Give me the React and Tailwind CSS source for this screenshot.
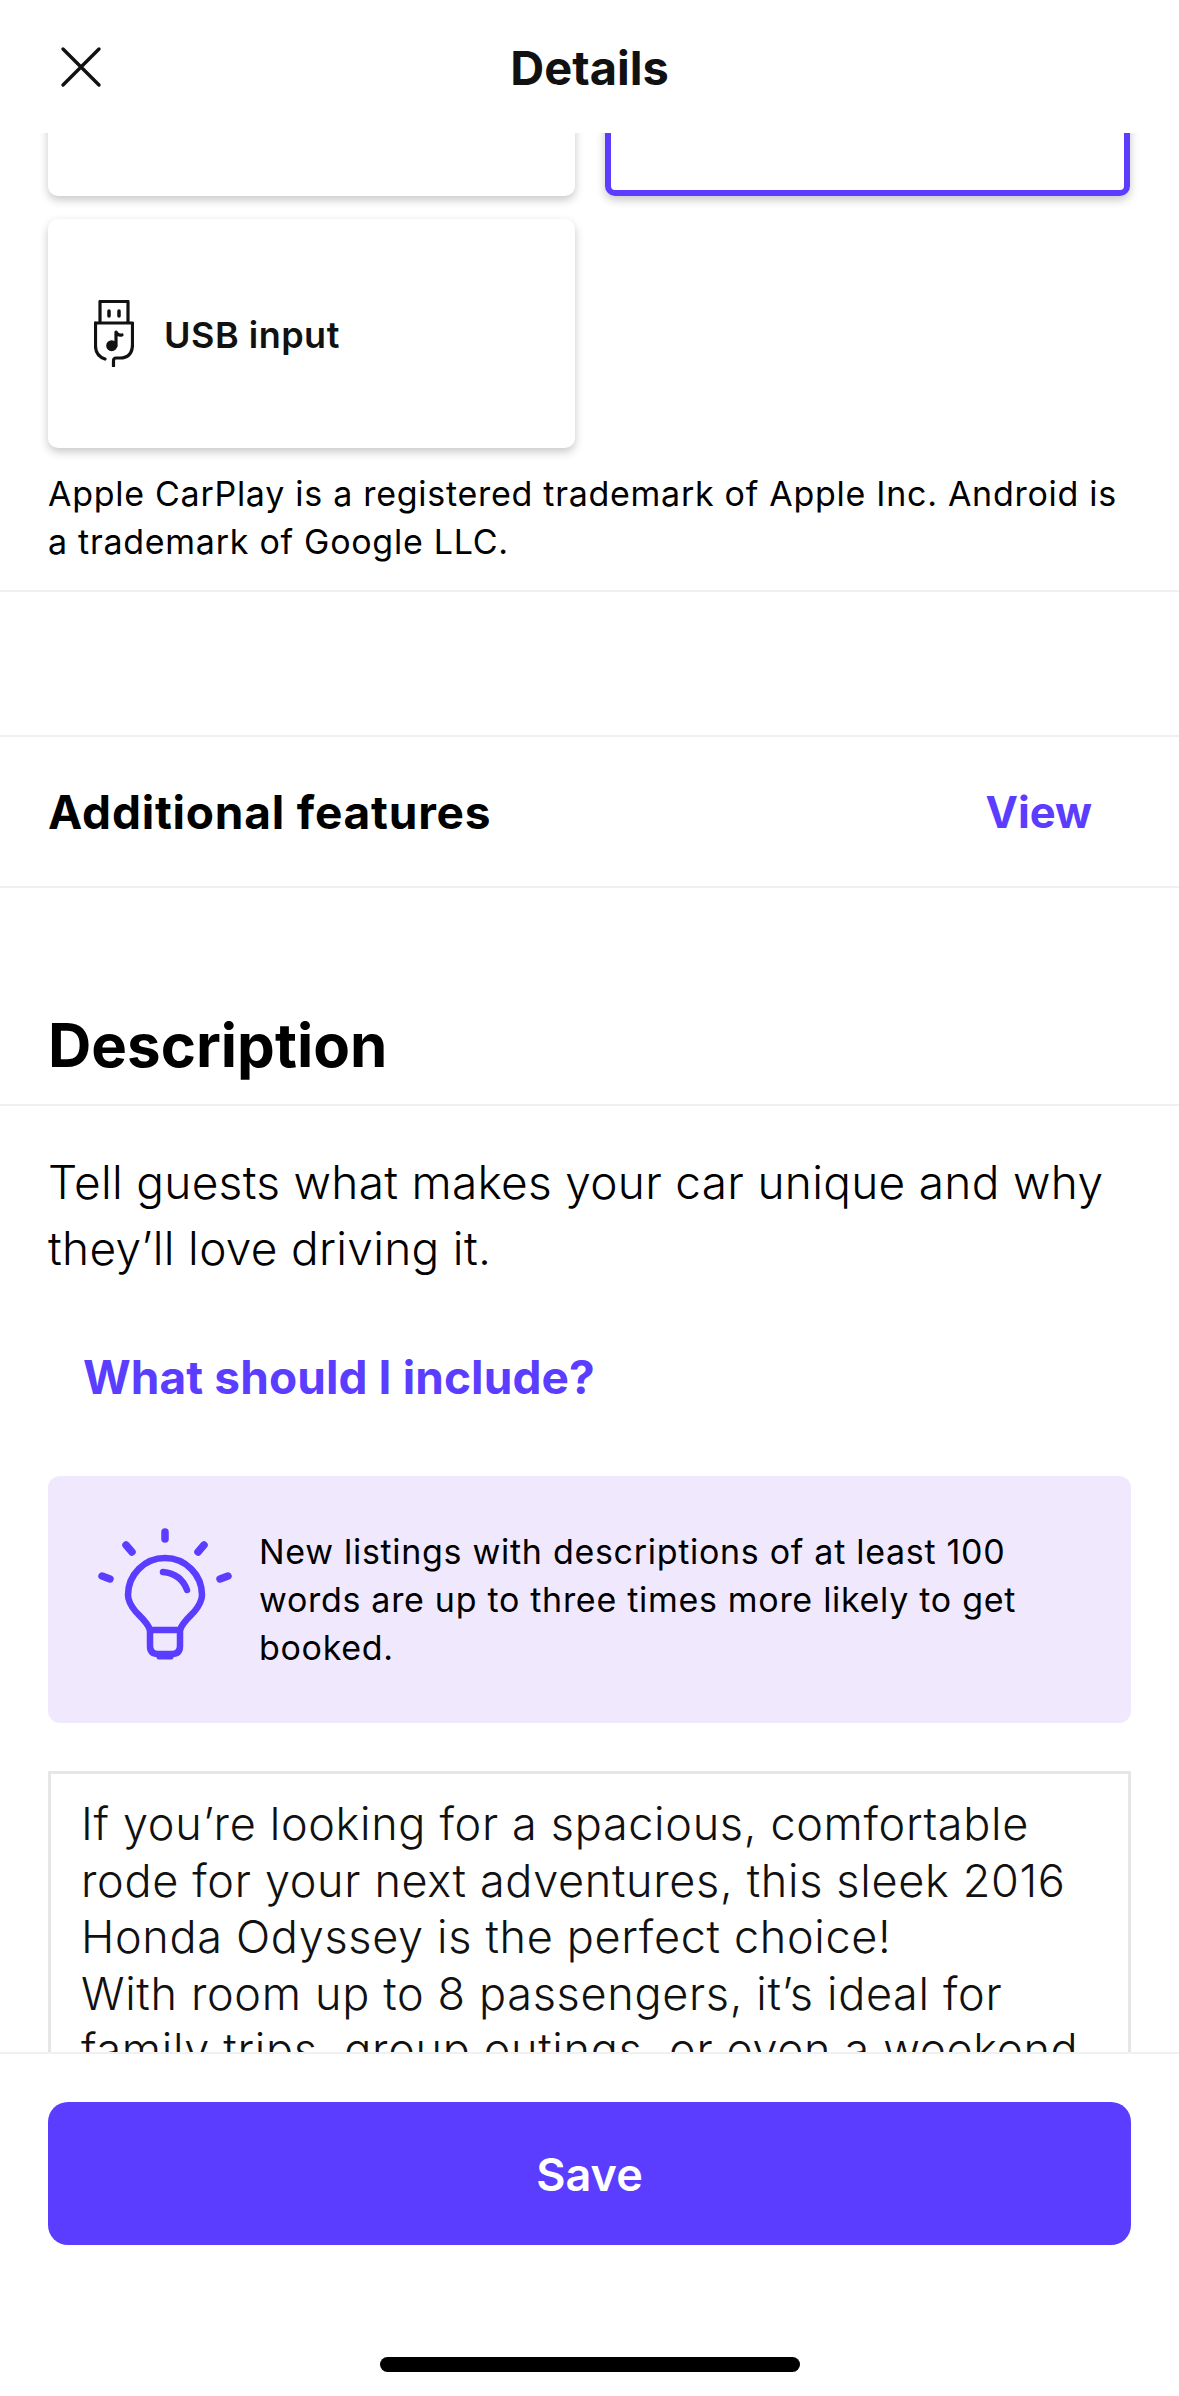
const font = { fontFamily: '"Inter", "Liberation Sans", sans-serif' };

function CloseIcon() {
  return (
    <svg width="42" height="42" viewBox="0 0 42 42" fill="none" stroke="#111" strokeWidth="3.4" strokeLinecap="round">
      <path d="M3 3 L39 39 M39 3 L3 39" />
    </svg>
  );
}

function UsbIcon() {
  return (
    <svg width="40" height="67" viewBox="0 0 40 67" fill="none" stroke="#111" strokeWidth="3.2" strokeLinecap="round" strokeLinejoin="round">
      <path d="M6 22 V1.5 H34 V22" />
      <path d="M15 11 V16 M25 11 V16" strokeWidth="3.5" />
      <path d="M1.5 23 H38.5 V44 Q38.5 58 26 58 H22 Q19.5 58 19.5 61 V66" />
      <path d="M1.5 23 V46 Q1.5 56 11 59" />
      <path d="M22 46 V32 Q24 36 28 35" />
      <circle cx="17.7" cy="45.7" r="5.5" fill="#111" stroke="none" />
    </svg>
  );
}

function BulbIcon() {
  return (
    <svg width="134" height="136" viewBox="0 0 134 136" fill="none" stroke="#5a3dff" strokeWidth="6.5" strokeLinecap="round" strokeLinejoin="round">
      <path d="M67 5 V12 M28 18 L34 25 M106 18 L100 25 M4 49 L12 52 M130 49 L122 52" strokeWidth="7.5" />
      <path d="M52 103 C50 96 44 91 38 85 C33 79 30 74 30 68 A37 37 0 0 1 104 68 C104 74 101 79 96 85 C90 91 84 96 82 103 Z" />
      <path d="M52 103 V119 Q52 127 60 127 H74 Q82 127 82 119 V103" />
      <path d="M61 130 H73" strokeWidth="5" />
      <path d="M65 45 C76 46 85 52 89 63" />
    </svg>
  );
}

export default function App() {
  return (
    <div className="flex h-[2396px] w-[1179px] flex-col overflow-hidden bg-white text-black" style={font}>
      <header className="relative flex h-[133px] shrink-0 items-center justify-center bg-white">
        <div className="absolute left-[60px] top-[46px]">
          <CloseIcon />
        </div>
        <h1 className="pt-[2px] text-[47px] font-bold leading-none text-[#111]">Details</h1>
      </header>

      <main className="min-h-0 flex-1 overflow-hidden">
        <div className="-mt-[150px]">
          <div className="grid grid-cols-[527px_525px] gap-x-[30px] gap-y-[23px] px-12">
            <div className="h-[213px] rounded-[10px] bg-white shadow-[0_4px_10px_rgba(0,0,0,0.22)]" />
            <div className="h-[213px] rounded-[10px] border-[6px] border-[#5a3dff] bg-white shadow-[0_4px_10px_rgba(0,0,0,0.22)]" />
            <div className="flex h-[229px] items-center gap-[30px] rounded-[10px] bg-white pl-[46px] shadow-[0_4px_10px_rgba(0,0,0,0.22)]">
              <UsbIcon />
              <span className="pt-[2px] text-[36px] font-semibold tracking-[0.5px] text-[#111]">USB input</span>
            </div>
          </div>

          <p className="mt-[22px] border-b-2 border-[#f0f0f0] px-12 pb-[24px] text-[34px] leading-[48px] tracking-[0.72px]">
            Apple CarPlay is a registered trademark of Apple Inc. Android is a trademark of Google LLC.
          </p>

          <div className="mt-[143px] flex h-[153px] items-center justify-between border-y-2 border-[#f0f0f0] pl-12 pr-[87px] pt-[2px]">
            <span className="text-[46px] font-bold tracking-[0.8px]">Additional features</span>
            <span className="text-[43.5px] font-bold text-[#5a3dff]">View</span>
          </div>

          <h2 className="mt-[122px] border-b-2 border-[#f0f0f0] px-12 pb-[24px] text-[60px] font-bold leading-[70px]">Description</h2>

          <p className="mt-[43px] px-12 text-[46px] font-light leading-[66px] tracking-[0.3px]">
            Tell guests what makes your car unique and why they’ll love driving it.
          </p>

          <p className="mt-[68px] pl-[83px] text-[46px] font-bold leading-[56px] tracking-[0.1px] text-[#5a3dff]">What should I include?</p>

          <div className="mx-12 mt-[71px] flex h-[247px] items-center gap-[27px] rounded-[12px] bg-[#f0e9fe] pl-[50px] pr-[100px]">
            <div className="mb-[9px] shrink-0">
              <BulbIcon />
            </div>
            <p className="text-[34px] leading-[48px] tracking-[0.7px]">
              New listings with descriptions of at least 100 words are up to three times more likely to get booked.
            </p>
          </div>

          <div className="mx-12 mt-[48px] h-[400px] border-[3px] border-[#e6e6e6] px-[30px] pt-[22px] text-[45px] font-light leading-[56.5px] tracking-[0.67px] text-[#111]">
            If you’re looking for a spacious, comfortable rode for your next adventures, this sleek 2016 Honda Odyssey is the perfect choice!
            <br />
            With room up to 8 passengers, it’s ideal for family trips, group outings, or even a weekend getaway.
          </div>
        </div>
      </main>

      <footer className="relative flex h-[344px] shrink-0 flex-col border-t-2 border-[#f0f0f0] bg-white px-12 pt-[48px]">
        <button className="flex h-[143px] w-full items-center justify-center rounded-[20px] bg-[#5a3dff] pt-[2px] text-[45px] font-semibold text-white">
          Save
        </button>
        <div className="absolute bottom-[24px] left-[380px] h-[15px] w-[420px] rounded-full bg-black" />
      </footer>
    </div>
  );
}
